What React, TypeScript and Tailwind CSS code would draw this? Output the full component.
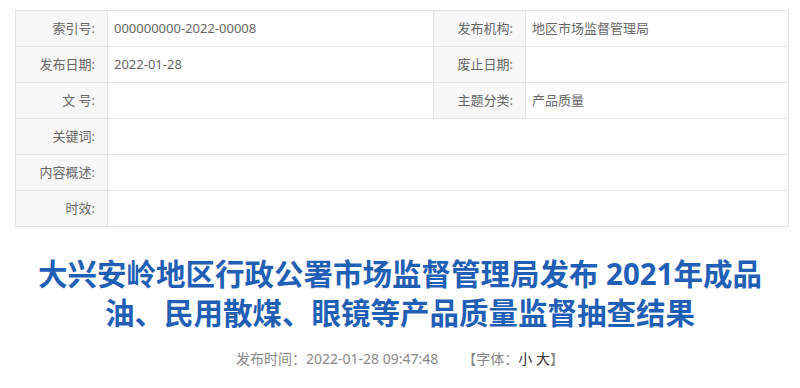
import React from 'react';

const font = { fontFamily: '"Noto Sans", "Noto Sans CJK SC", sans-serif' };

const labelCls =
  'w-[92px] bg-[#f7f7f7] border border-[#e4e4e4] pr-[12px] text-right text-[13px] text-[#666] font-normal whitespace-nowrap';
const valueCls = 'border border-[#e4e4e4] pl-[6px] text-left text-[13px] text-[#666]';

export default function App() {
  return (
    <div className="w-[800px] h-[388px] bg-white overflow-hidden" style={font}>
      {/* Info table */}
      <div className="pt-[10px] px-[15px] pr-[12px]">
        <table className="w-[773px] border-collapse table-fixed">
          <colgroup>
            <col className="w-[92px]" />
            <col className="w-[326px]" />
            <col className="w-[92px]" />
            <col className="w-[263px]" />
          </colgroup>
          <tbody>
            <tr className="h-[36px]">
              <th className={labelCls}>索引号:</th>
              <td className={valueCls}>000000000-2022-00008</td>
              <th className={labelCls}>发布机构:</th>
              <td className={valueCls}>地区市场监督管理局</td>
            </tr>
            <tr className="h-[36px]">
              <th className={labelCls}>发布日期:</th>
              <td className={valueCls}>2022-01-28</td>
              <th className={labelCls}>废止日期:</th>
              <td className={valueCls}></td>
            </tr>
            <tr className="h-[36px]">
              <th className={labelCls}>文 号:</th>
              <td className={valueCls}></td>
              <th className={labelCls}>主题分类:</th>
              <td className={valueCls}>产品质量</td>
            </tr>
            <tr className="h-[36px]">
              <th className={labelCls}>关键词:</th>
              <td className={valueCls} colSpan={3}></td>
            </tr>
            <tr className="h-[36px]">
              <th className={labelCls}>内容概述:</th>
              <td className={valueCls} colSpan={3}></td>
            </tr>
            <tr className="h-[36px]">
              <th className={labelCls}>时效:</th>
              <td className={valueCls} colSpan={3}></td>
            </tr>
          </tbody>
        </table>
      </div>

      {/* Title */}
      <h1 className="mt-[27px] text-center text-[29.5px] leading-[39px] font-bold text-[#1f5fb6]">
        大兴安岭地区行政公署市场监督管理局发布 2021年成品
        <br />
        油、民用散煤、眼镜等产品质量监督抽查结果
      </h1>

      {/* Meta */}
      <div className="mt-[17px] flex justify-center text-[14px] leading-[20px] text-[#888]">
        <span>发布时间：2022-01-28 09:47:48</span>
        <span className="ml-[24px]">
          【字体：<span className="text-[#333]">小</span> <span className="text-[#333]">大</span>】
        </span>
      </div>
    </div>
  );
}
